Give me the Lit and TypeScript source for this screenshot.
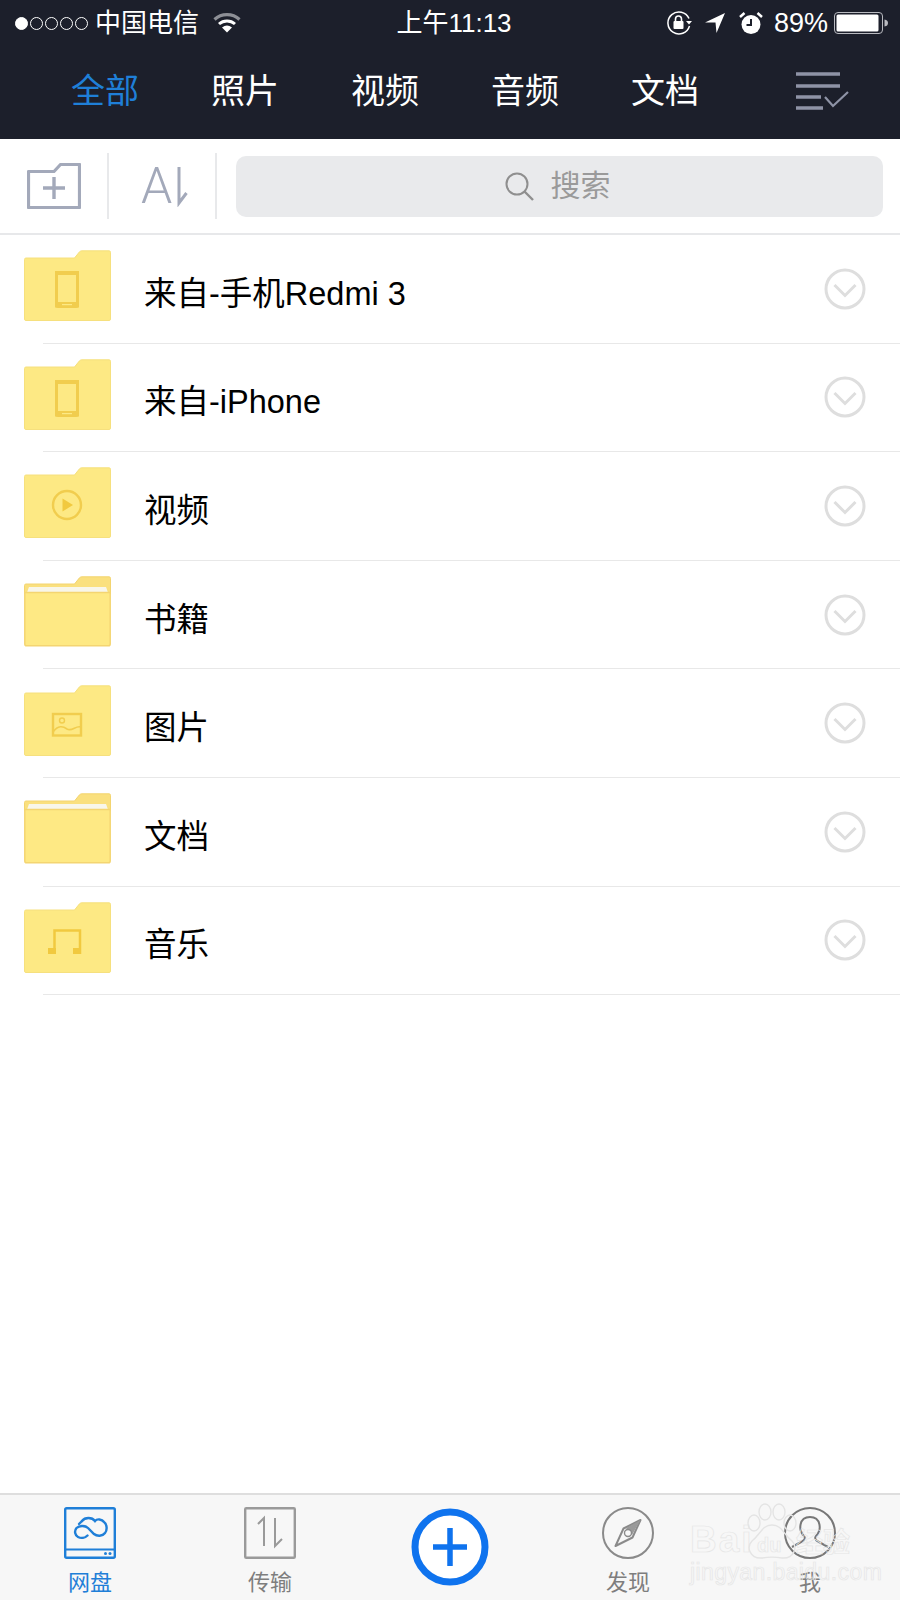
import { LitElement, html, css, svg } from "lit";
import { customElement } from "lit/decorators.js";

const folderBody = svg`<path d="M2 8H50.500L55.500 1.800Q56.500 .8 58 .8H85Q86.500 .8 86.500 2.300V69Q86.500 70.500 85 70.500H2Q.5 70.500 .5 69V9.500Q.5 8 2 8Z" fill="#fde984" stroke="#f6e07e"/>`;
const openBody = svg`
  <path d="M2 8H50.500L55.500 1.800Q56.500 .8 58 .8H85Q86.500 .8 86.500 2.300V18H.5V9.500Q.5 8 2 8Z" fill="#fae07e" stroke="#f3d470"/>
  <path d="M5 11H82L84 16.500H3Z" fill="#f8f6ea"/>
  <path d="M.8 16.500H86.200V68Q86.200 69.800 84.400 69.800H2.600Q.8 69.800 .8 68Z" fill="#fee984" stroke="#f4d572" stroke-width="1.500"/>`;

const inner: Record<string, unknown> = {
  phone: svg`<rect x="32.500" y="22.500" width="21" height="34" rx="1.500" fill="none" stroke="#f1cd4e" stroke-width="3"/><rect x="31" y="21" width="24" height="4" fill="#f1cd4e"/><rect x="31" y="52" width="24" height="5.500" fill="#f1cd4e"/><rect x="38" y="54" width="10" height="1.200" fill="#fde984"/>`,
  play: svg`<circle cx="43" cy="38" r="14" fill="none" stroke="#f1cd4e" stroke-width="2.400"/><path d="M38.500 31.500L49 38L38.500 44.500Z" fill="#f1c93f"/>`,
  image: svg`<rect x="29" y="29" width="28" height="21.500" fill="none" stroke="#f1cd4e" stroke-width="2.400"/><circle cx="38" cy="35.500" r="2.500" fill="none" stroke="#f1cd4e" stroke-width="1.400"/><path d="M29 47C34 40 39 41 43 44C48 47 52 40 57 42" fill="none" stroke="#f1cd4e" stroke-width="1.600"/>`,
  music: svg`<path d="M30.500 48V28.500H56V52" fill="none" stroke="#f1c93f" stroke-width="2.500"/><rect x="24" y="46" width="8" height="6" fill="#f1c93f"/><rect x="49" y="46" width="8" height="6" fill="#f1c93f"/>`,
  open: svg``,
};

const rows: [string, string][] = [
  ["来自-手机Redmi 3", "phone"],
  ["来自-iPhone", "phone"],
  ["视频", "play"],
  ["书籍", "open"],
  ["图片", "image"],
  ["文档", "open"],
  ["音乐", "music"],
];

@customElement("app-root")
export class AppRoot extends LitElement {
  static styles = css`
    :host {
      display: block;
      width: 900px;
      height: 1600px;
      background: #fff;
      position: relative;
      overflow: hidden;
      font-family: "Liberation Sans", "Noto Sans CJK SC", sans-serif;
      color: #000;
    }
    svg { display: block; flex: none; }
    .header { height: 139px; background: #1c1f2b; color: #fff; display: flex; flex-direction: column; }
    .status { height: 46px; display: grid; grid-template-columns: 1fr auto 1fr; align-items: center; padding: 0 12px 0 15px; font-size: 26px; box-sizing: border-box; }
    .status-left, .status-right { display: flex; align-items: center; }
    .status-right { justify-content: flex-end; }
    .dots { display: flex; gap: 2px; margin-right: 7px; }
    .dot { width: 13px; height: 13px; border-radius: 50%; border: 1.300px solid #fff; box-sizing: border-box; }
    .dot.on { background: #fff; }
    .carrier { margin-right: 14px; line-height: 44px; }
    .time { padding-left: 5px; line-height: 44px; }
    .pct { font-size: 27px; margin: 0 6px 0 11px; }
    .tabs { flex: 1; display: flex; align-items: center; padding: 0 50px 4px 71px; }
    .tab { font-size: 34px; width: 140px; line-height: 44px; flex: none; }
    .tab.active { color: #1f7fd8; }
    .tabs svg { margin-left: auto; margin-top: 1px; }
    .toolbar { height: 94px; display: flex; align-items: center; border-bottom: 2px solid #e7e8ea; box-sizing: content-box; }
    .tool-a { width: 107px; display: flex; justify-content: center; box-sizing: border-box; }
    .sep { width: 2px; height: 66px; background: #e8e9eb; flex: none; }
    .tool-b { width: 106px; display: flex; justify-content: center; align-items: center; color: #a3a9ba; padding-left: 5px; box-sizing: border-box; }
    .tool-a-letter { font-family: Roboto, "Liberation Sans", sans-serif; font-weight: 300; font-size: 50px; line-height: 50px; }
    .search { flex: 1; margin: 0 17px 0 19px; height: 61px; border-radius: 10px; background: #e9eaec; display: flex; align-items: center; justify-content: center; gap: 17px; color: #9a9a9a; font-size: 30px; padding-right: 4px; box-sizing: border-box; }
    .search span { line-height: 44px; }
    .rows { display: flex; flex-direction: column; }
    .row { height: 107.600px; display: flex; align-items: center; padding: 0 34px 0 24px; box-sizing: border-box; }
    .name { flex: 1; margin-left: 33px; font-size: 32.500px; line-height: 44px; padding-top: 10px; white-space: nowrap; }
    .divider { height: 1px; margin-left: 43px; background: #e8e8e8; }
    .folder { margin-top: -6px; }
    .tabbar { position: absolute; left: 0; right: 0; bottom: 0; height: 105px; background: #f7f7f7; border-top: 2px solid #dedede; display: grid; grid-template-columns: repeat(5, 180px); box-sizing: content-box; }
    .item { display: flex; flex-direction: column; align-items: center; padding-top: 12px; color: #7e7e7e; font-size: 22px; }
    .item span { line-height: 30px; margin-top: 9px; }
    .item.active { color: #1f7fd8; }
    .item.plus { padding-top: 13px; }
    .shift { transform: translateX(-2px); }
    .mark { position: absolute; left: 690px; top: 1503px; width: 170px; height: 80px; pointer-events: none; color: transparent; -webkit-text-stroke: .7px #e6e6e6; }
    .mark-bai, .mark-du, .mark-jing, .mark-url { position: absolute; white-space: nowrap; }
    .mark-bai { left: 0; top: 17px; font-size: 37px; line-height: 40px; letter-spacing: 2px; font-weight: 700; }
    .mark-du { left: 67px; top: 31px; font-size: 20px; line-height: 22px; font-weight: 700; }
    .mark-jing { left: 106px; top: 22px; font-size: 27px; line-height: 32px; font-family: "Noto Sans CJK SC", sans-serif; font-weight: 700; }
    .mark-url { left: 0; top: 56px; font-size: 23px; line-height: 26px; letter-spacing: .4px; }
    .paw { position: absolute; left: 52px; top: 0; }
  `;

  private folder(kind: string) {
    return html`<svg class="folder" width="87" height="71" viewBox="0 0 87 71">${kind === "open" ? openBody : folderBody}${inner[kind]}</svg>`;
  }

  render() {
    return html`
      <div class="header">
        <div class="status">
          <div class="status-left">
            <div class="dots"><i class="dot on"></i><i class="dot"></i><i class="dot"></i><i class="dot"></i><i class="dot"></i></div>
            <span class="carrier">中国电信</span>
            <svg width="28" height="22" viewBox="0 0 28 22">
              <path d="M1.500 7.500C8.500 1 19.500 1 26.500 7.500" fill="none" stroke="#8d8f96" stroke-width="3.200"/>
              <path d="M6 12C10.500 8 17.500 8 22 12" fill="none" stroke="#fff" stroke-width="3"/>
              <path d="M9 15.500Q14 11.500 19 15.500L14 20.500Z" fill="#fff"/>
            </svg>
          </div>
          <div class="time">上午11:13</div>
          <div class="status-right">
            <svg width="26" height="26" viewBox="0 0 26 26" style="margin-right:12px">
              <path d="M23 8.500A11 11 0 1 0 23.500 16" fill="none" stroke="#fff" stroke-width="1.500"/>
              <path d="M20 11H26L23 14.500Z" fill="#fff"/>
              <rect x="7.500" y="11" width="10" height="8" rx="1" fill="#fff"/>
              <path d="M9.500 11V9A3 3 0 0 1 15.500 9V11" fill="none" stroke="#fff" stroke-width="1.600"/>
            </svg>
            <svg width="22" height="24" viewBox="0 0 22 24" style="margin-right:13px"><path d="M21 2L1 11.500H11.500L12.500 22Z" fill="#fff"/></svg>
            <svg width="24" height="24" viewBox="0 0 24 24">
              <circle cx="12" cy="13.500" r="9.500" fill="#fff"/>
              <path d="M12 8V14H7.500" fill="none" stroke="#1c1f2b" stroke-width="2"/>
              <path d="M1 6L5.500 2M23 6L18.500 2" stroke="#fff" stroke-width="2.500"/>
            </svg>
            <span class="pct">89%</span>
            <svg width="54" height="24" viewBox="0 0 54 24">
              <rect x=".5" y="1.500" width="48" height="21" rx="3.500" fill="none" stroke="#b9bac0" stroke-width="1"/>
              <rect x="2.500" y="3.500" width="42" height="17" rx="1.500" fill="#fff"/>
              <path d="M50.500 8.500Q54 9 54 12T50.500 15.500Z" fill="#b9bac0"/>
            </svg>
          </div>
        </div>
        <div class="tabs">
          <div class="tab active">全部</div>
          <div class="tab">照片</div>
          <div class="tab">视频</div>
          <div class="tab">音频</div>
          <div class="tab" style="width:auto">文档</div>
          <svg width="54" height="38" viewBox="0 0 54 38">
            <path d="M0 2H44M0 14H44M0 25H25M0 36H27" stroke="#8e93a6" stroke-width="3.500" fill="none"/>
            <path d="M29 25L37 34L52 20" stroke="#8e93a6" stroke-width="2.200" fill="none"/>
          </svg>
        </div>
      </div>

      <div class="toolbar">
        <div class="tool-a">
          <svg width="54" height="46" viewBox="0 0 54 46">
            <path d="M1.500 8.500H27L33.500 1.500H52.500V44.500H1.500Z" fill="none" stroke="#a3a9ba" stroke-width="3.200" stroke-linejoin="round"/>
            <path d="M27 14V36M16 25H38" stroke="#a3a9ba" stroke-width="3.400"/>
          </svg>
        </div>
        <div class="sep"></div>
        <div class="tool-b">
          <span class="tool-a-letter">A</span>
          <svg width="12" height="42" viewBox="0 0 12 42" style="margin-left:4px">
            <path d="M3 2V38L10.500 28" fill="none" stroke="#a3a9ba" stroke-width="3"/>
          </svg>
        </div>
        <div class="sep"></div>
        <div class="search">
          <svg width="29" height="29" viewBox="0 0 29 29">
            <circle cx="12" cy="12" r="10.500" fill="none" stroke="#8f8f8f" stroke-width="2"/>
            <path d="M19.500 19.500L28 28" stroke="#8f8f8f" stroke-width="2.400"/>
          </svg>
          <span>搜索</span>
        </div>
      </div>

      <div class="rows">
        ${rows.map(
          ([name, kind]) => html`
            <div class="row">
              ${this.folder(kind)}
              <div class="name">${name}</div>
              <svg width="42" height="42" viewBox="0 0 42 42">
                <circle cx="21" cy="21" r="19" fill="none" stroke="#dedede" stroke-width="3"/>
                <path d="M10.500 17L21 27.500L31.500 17" fill="none" stroke="#dedede" stroke-width="3"/>
              </svg>
            </div>
            <div class="divider"></div>
          `
        )}
      </div>

      <div class="tabbar">
        <div class="item active">
          <svg width="52" height="52" viewBox="0 0 52 52">
            <rect x="1.200" y="1.200" width="49.600" height="49.600" rx="1.500" fill="none" stroke="#1f7fd8" stroke-width="2.400"/>
            <path d="M1 42.500H51" stroke="#1f7fd8" stroke-width="2"/>
            <circle cx="41.500" cy="46.500" r="1.500" fill="#1f7fd8"/><circle cx="46" cy="46.500" r="1.500" fill="#1f7fd8"/>
            <path d="M18 15C21 11 28 11 31 15C33 12.500 38 13 40 16C43 18 43.500 24 41 27C38.500 30.500 33 30.500 30 28L24 22C21 19 15 19.500 12.500 22C10 25 11 29.500 14 31C17 32.500 21 32 23.500 29.500" fill="none" stroke="#1f7fd8" stroke-width="2.400" stroke-linecap="round" transform="translate(0 -1)"/>
            <path d="M18 15L15 18" stroke="#1f7fd8" stroke-width="2.400" stroke-linecap="round" transform="translate(0 -1)"/>
          </svg>
          <span>网盘</span>
        </div>
        <div class="item">
          <svg width="52" height="52" viewBox="0 0 52 52">
            <rect x="1.200" y="1.200" width="49.600" height="49.600" rx="1" fill="none" stroke="#9a9a9a" stroke-width="2.400"/>
            <path d="M14 17L20 11V39" fill="none" stroke="#9a9a9a" stroke-width="2"/>
            <path d="M31 11V39L38 32" fill="none" stroke="#9a9a9a" stroke-width="2"/>
          </svg>
          <span>传输</span>
        </div>
        <div class="item plus">
          <svg width="78" height="78" viewBox="0 0 78 78">
            <circle cx="39" cy="39" r="35" fill="#fff" stroke="#0f73ee" stroke-width="7"/>
            <path d="M39 20V58M22 39H56" stroke="#0f73ee" stroke-width="5.500"/>
          </svg>
        </div>
        <div class="item shift">
          <svg width="52" height="52" viewBox="0 0 52 52">
            <circle cx="26" cy="26" r="25" fill="none" stroke="#8a8a8a" stroke-width="2"/>
            <path d="M38.500 13L30.500 30.500L13.500 39L21.500 21.500Z" fill="none" stroke="#8a8a8a" stroke-width="2" stroke-linejoin="round"/>
            <path d="M38.500 13L24 21L30 28Z" fill="#9a9a9a"/>
            <circle cx="26" cy="26" r="3.500" fill="#f7f7f7" stroke="#8a8a8a" stroke-width="1.400"/>
          </svg>
          <span>发现</span>
        </div>
        <div class="item">
          <svg width="52" height="52" viewBox="0 0 52 52">
            <circle cx="26" cy="26" r="25" fill="none" stroke="#777" stroke-width="2"/>
            <path d="M20 29C14 23 15 10 26 10C37 10 38 23 32 29C30.500 31 31 33 34 34.500L44 40M20 29C21.500 31 21 33 18 34.500L8 40" fill="none" stroke="#777" stroke-width="2"/>
          </svg>
          <span>我</span>
        </div>
      </div>

      <div class="mark">
        <svg class="paw" width="62" height="60" viewBox="0 0 62 60">
          <ellipse cx="12" cy="20" rx="6" ry="8" fill="none" stroke="#e4e4e4" stroke-width="1.400"/>
          <ellipse cx="23" cy="9" rx="6" ry="8" fill="none" stroke="#e4e4e4" stroke-width="1.400"/>
          <ellipse cx="37" cy="9" rx="6" ry="8" fill="none" stroke="#e4e4e4" stroke-width="1.400"/>
          <ellipse cx="48" cy="20" rx="6" ry="8" fill="none" stroke="#e4e4e4" stroke-width="1.400"/>
          <path d="M30 22C20 22 18 32 10 38C4 44 8 56 20 55C26 54 34 54 40 55C52 56 56 44 50 38C42 32 40 22 30 22Z" fill="none" stroke="#e4e4e4" stroke-width="1.400"/>
        </svg>
        <span class="mark-bai">Bai</span>
        <span class="mark-du">du</span>
        <span class="mark-jing">经验</span>
        <span class="mark-url">jingyan.baidu.com</span>
      </div>
    `;
  }
}
